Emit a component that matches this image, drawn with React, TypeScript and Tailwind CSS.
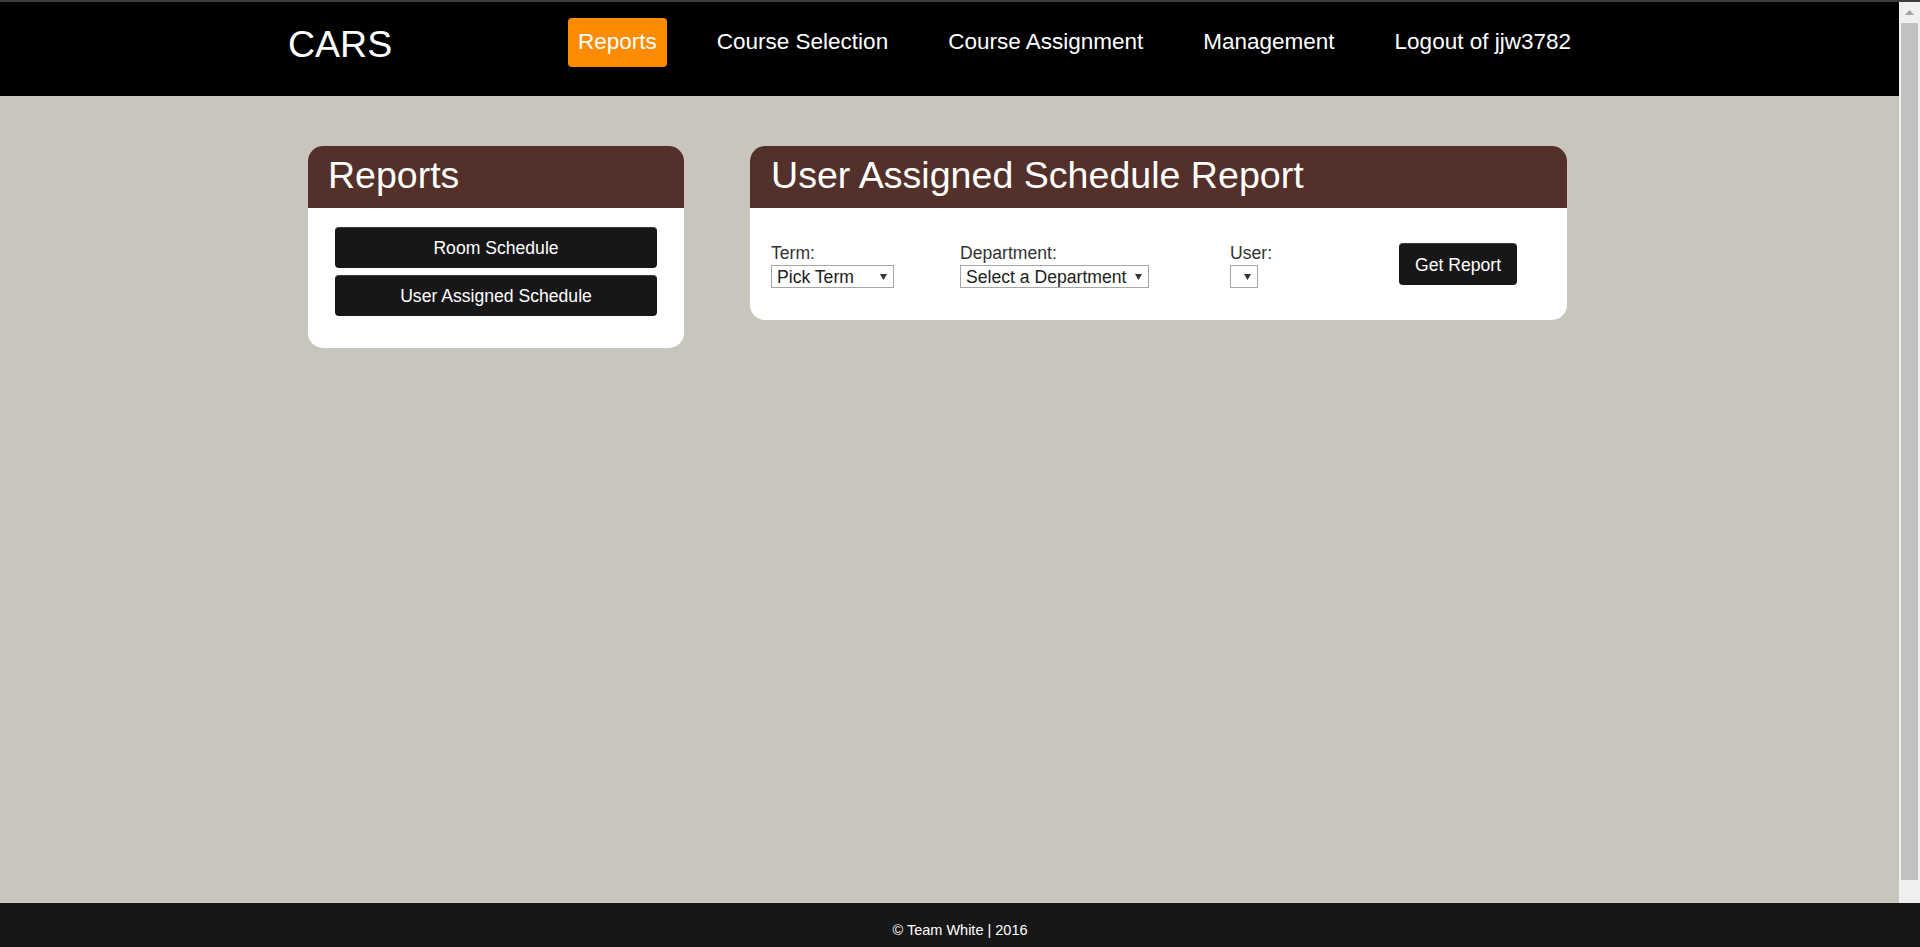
import React from "react";

const Arrow = () => (
  <svg width="7" height="6" viewBox="0 0 7 6" className="shrink-0">
    <polygon points="0,0 7,0 3.5,6" fill="#333" />
  </svg>
);

function FakeSelect({ text, width }: { text: string; width: string }) {
  return (
    <div
      className={`${width} h-[23px] border border-[#a6a6a6] bg-white flex items-center justify-between pl-[5px] pr-[6px] text-[17.6px] leading-[20px] text-[#222]`}
    >
      <span className="whitespace-nowrap">{text}</span>
      <Arrow />
    </div>
  );
}

export default function App() {
  return (
    <div
      className="w-[1920px] h-[947px] flex flex-col overflow-hidden bg-[#c8c5bd]"
      style={{ fontFamily: '"Liberation Sans", Arial, sans-serif' }}
    >
      <div className="h-[2px] bg-[#3d3d3d] shrink-0" />
      <div className="flex h-[901px] shrink-0">
        <div className="flex-1 flex flex-col">
          {/* Header */}
          <header className="h-[94px] bg-black flex items-start pl-[288px] text-white">
            <div className="w-[280px] mt-[24px] text-[37.5px] leading-[37px]">CARS</div>
            <nav className="flex items-start gap-[40px] mt-[16px] text-[22.5px] leading-[25px]">
              <a className="h-[49px] px-[10px] pt-[11px] rounded-[4px] bg-[#ff8c00] text-white">Reports</a>
              <a className="h-[49px] px-[10px] pt-[11px]">Course Selection</a>
              <a className="h-[49px] px-[10px] pt-[11px]">Course Assignment</a>
              <a className="h-[49px] px-[10px] pt-[11px]">Management</a>
              <a className="h-[49px] px-[10px] pt-[11px]">Logout of jjw3782</a>
            </nav>
          </header>

          {/* Main */}
          <main className="flex items-start gap-[66px] pl-[308px] pt-[50px]">
            {/* Left card */}
            <section className="w-[376px] rounded-[15px] bg-white overflow-hidden">
              <div className="h-[62px] bg-[#533029] pl-[20px] pt-[11px] text-white text-[37.5px] leading-[37px]">
                Reports
              </div>
              <div className="px-[27px] pt-[19px] pb-[32px] flex flex-col gap-[7px]">
                <button className="h-[41px] w-full rounded-[4px] bg-[#171717] border-t border-[#3a3a3a] text-white text-[17.6px] leading-[20px]">
                  Room Schedule
                </button>
                <button className="h-[41px] w-full rounded-[4px] bg-[#171717] border-t border-[#3a3a3a] text-white text-[17.6px] leading-[20px]">
                  User Assigned Schedule
                </button>
              </div>
            </section>

            {/* Right card */}
            <section className="w-[817px] rounded-[15px] bg-white overflow-hidden">
              <div className="h-[62px] bg-[#533029] pl-[21px] pt-[11px] text-white text-[37.6px] leading-[37px] whitespace-nowrap">
                User Assigned Schedule Report
              </div>
              <div className="h-[112px] pl-[21px] pt-[35px] flex items-start text-[17.6px] leading-[20px] text-[#333]">
                <div className="w-[189px] flex flex-col gap-[2px]">
                  <span>Term:</span>
                  <FakeSelect text="Pick Term" width="w-[123px]" />
                </div>
                <div className="w-[270px] flex flex-col gap-[2px]">
                  <span>Department:</span>
                  <FakeSelect text="Select a Department" width="w-[189px]" />
                </div>
                <div className="w-[169px] flex flex-col gap-[2px]">
                  <span>User:</span>
                  <FakeSelect text="" width="w-[28px]" />
                </div>
                <button className="h-[42px] w-[118px] rounded-[4px] bg-[#171717] border-t border-[#3a3a3a] text-white text-[17.6px] leading-[20px]">
                  Get Report
                </button>
              </div>
            </section>
          </main>
        </div>

        {/* Scrollbar */}
        <div className="w-[21px] bg-[#f0f0f0] flex flex-col items-center">
          <div className="h-[21px] flex items-center justify-center">
            <svg width="9" height="5" viewBox="0 0 9 5">
              <polygon points="0,5 9,5 4.5,0" fill="#a3a3a3" />
            </svg>
          </div>
          <div className="w-[17px] h-[857px] bg-[#c1c1c1]" />
        </div>
      </div>

      {/* Footer */}
      <footer className="h-[44px] bg-[#171717] text-white text-[14.5px] leading-[17px] text-center pt-[19px]">
        © Team White | 2016
      </footer>
    </div>
  );
}
